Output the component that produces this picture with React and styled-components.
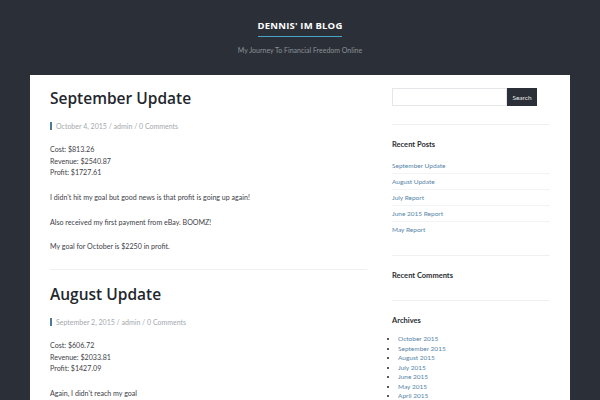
import styled, { createGlobalStyle } from "styled-components";

const GlobalStyle = createGlobalStyle`
  html, body {
    margin: 0;
    padding: 0;
    background: #2b3038;
  }
  body {
    font-family: Lato, "Open Sans", sans-serif;
    overflow: hidden;
  }
`;

const Page = styled.div`
  width: 600px;
  height: 400px;
  overflow: hidden;
  background: #2b3038;
`;

const Header = styled.header`
  display: flex;
  flex-direction: column;
  align-items: center;
  padding-top: 19px;
  box-sizing: border-box;
  height: 75px;
`;

const SiteTitle = styled.a`
  font-family: "Open Sans", sans-serif;
  font-weight: 700;
  font-size: 9.5px;
  letter-spacing: 0.2px;
  color: #ffffff;
  text-decoration: none;
  padding-bottom: 3px;
  border-bottom: 1px solid #4aa3c8;
  line-height: 14px;
`;

const Tagline = styled.p`
  margin: 9px 0 0;
  font-size: 7px;
  color: #8b9097;
`;

const Wrapper = styled.div`
  margin: 0 30px;
  background: #ffffff;
  display: flex;
  gap: 25px;
  padding: 12px 20px 0;
  height: 325px;
  box-sizing: border-box;
`;

const Main = styled.main`
  width: 317px;
  flex-shrink: 0;
`;

const Post = styled.article`
  padding-bottom: 3px;
  border-bottom: ${(p) => (p.$last ? "none" : "1px solid #eef0f2")};
  margin-bottom: 13px;
`;

const PostTitle = styled.h2`
  font-family: "Open Sans", sans-serif;
  font-weight: 600;
  font-size: 15.5px;
  color: #23272d;
  margin: 0;
  line-height: 22px;
`;

const Meta = styled.div`
  margin-top: 13px;
  font-size: 7px;
  color: #a3a8ae;
  border-left: 2px solid #4f7a96;
  padding-left: 4px;
  line-height: 8px;
`;

const Body = styled.div`
  margin-top: 14px;
  font-size: 7.1px;
  color: #3d4147;
  line-height: 11.5px;
`;

const Para = styled.p`
  margin: 0 0 13.3px;
`;

const Sidebar = styled.aside`
  flex: 1;
  padding-top: 1px;
`;

const SearchRow = styled.form`
  display: flex;
  padding-bottom: 18px;
  border-bottom: 1px solid #eef0f2;
`;

const SearchInput = styled.input`
  width: 115px;
  height: 18px;
  box-sizing: border-box;
  border: 1px solid #e4e6e9;
  padding: 0 4px;
  font-size: 7px;
  outline: none;
`;

const SearchButton = styled.button`
  height: 18px;
  width: 30px;
  border: none;
  background: #2b3038;
  color: #e8eaec;
  font-family: Lato, sans-serif;
  font-size: 6.5px;
  padding: 0;
`;

const Widget = styled.section`
  padding: 15px 0 ${(p) => p.$pad || 18}px;
  border-bottom: ${(p) => (p.$last ? "none" : "1px solid #eef0f2")};
`;

const WidgetTitle = styled.h3`
  margin: 0;
  font-size: 7.5px;
  font-weight: 700;
  color: #2a2e33;
  line-height: 10px;
`;

const LinkList = styled.ul`
  list-style: none;
  margin: 8px 0 0;
  padding: 0;
`;

const LinkItem = styled.li`
  font-size: 6.5px;
  line-height: 15px;
  border-bottom: ${(p) => (p.$last ? "none" : "1px solid #f2f3f5")};
  a {
    color: #5584a8;
    text-decoration: none;
  }
`;

const ArchiveList = styled.ul`
  margin: 8px 0 0;
  padding-left: 6px;
  list-style: disc;
`;

const ArchiveItem = styled.li`
  font-size: 6.5px;
  line-height: 9.5px;
  color: #222;
  a {
    color: #5584a8;
    text-decoration: none;
  }
`;

const posts = [
  {
    title: "September Update",
    date: "October 4, 2015",
    lines: ["Cost: $813.26", "Revenue: $2540.87", "Profit: $1727.61"],
    paras: [
      "I didn't hit my goal but good news is that profit is going up again!",
      "Also received my first payment from eBay. BOOMZ!",
      "My goal for October is $2250 in profit.",
    ],
  },
  {
    title: "August Update",
    date: "September 2, 2015",
    lines: ["Cost: $606.72", "Revenue: $2033.81", "Profit: $1427.09"],
    paras: ["Again, I didn't reach my goal"],
  },
];

const recent = ["September Update", "August Update", "July Report", "June 2015 Report", "May Report"];
const archives = ["October 2015", "September 2015", "August 2015", "July 2015", "June 2015", "May 2015", "April 2015"];

export default function App() {
  return (
    <Page>
      <GlobalStyle />
      <Header>
        <SiteTitle href="#">DENNIS' IM BLOG</SiteTitle>
        <Tagline>My Journey To Financial Freedom Online</Tagline>
      </Header>
      <Wrapper>
        <Main>
          {posts.map((p, i) => (
            <Post key={p.title} $last={i === posts.length - 1}>
              <PostTitle>{p.title}</PostTitle>
              <Meta>{p.date} / admin / 0 Comments</Meta>
              <Body>
                <Para>
                  {p.lines.map((l, j) => (
                    <span key={l}>
                      {l}
                      {j < p.lines.length - 1 && <br />}
                    </span>
                  ))}
                </Para>
                {p.paras.map((t) => (
                  <Para key={t}>{t}</Para>
                ))}
              </Body>
            </Post>
          ))}
        </Main>
        <Sidebar>
          <SearchRow onSubmit={(e) => e.preventDefault()}>
            <SearchInput type="text" />
            <SearchButton type="submit">Search</SearchButton>
          </SearchRow>
          <Widget>
            <WidgetTitle>Recent Posts</WidgetTitle>
            <LinkList>
              {recent.map((r, i) => (
                <LinkItem key={r} $last={i === recent.length - 1}>
                  <a href="#">{r}</a>
                </LinkItem>
              ))}
            </LinkList>
          </Widget>
          <Widget $pad={19}>
            <WidgetTitle>Recent Comments</WidgetTitle>
          </Widget>
          <Widget $last>
            <WidgetTitle>Archives</WidgetTitle>
            <ArchiveList>
              {archives.map((a) => (
                <ArchiveItem key={a}>
                  <a href="#">{a}</a>
                </ArchiveItem>
              ))}
            </ArchiveList>
          </Widget>
        </Sidebar>
      </Wrapper>
    </Page>
  );
}
